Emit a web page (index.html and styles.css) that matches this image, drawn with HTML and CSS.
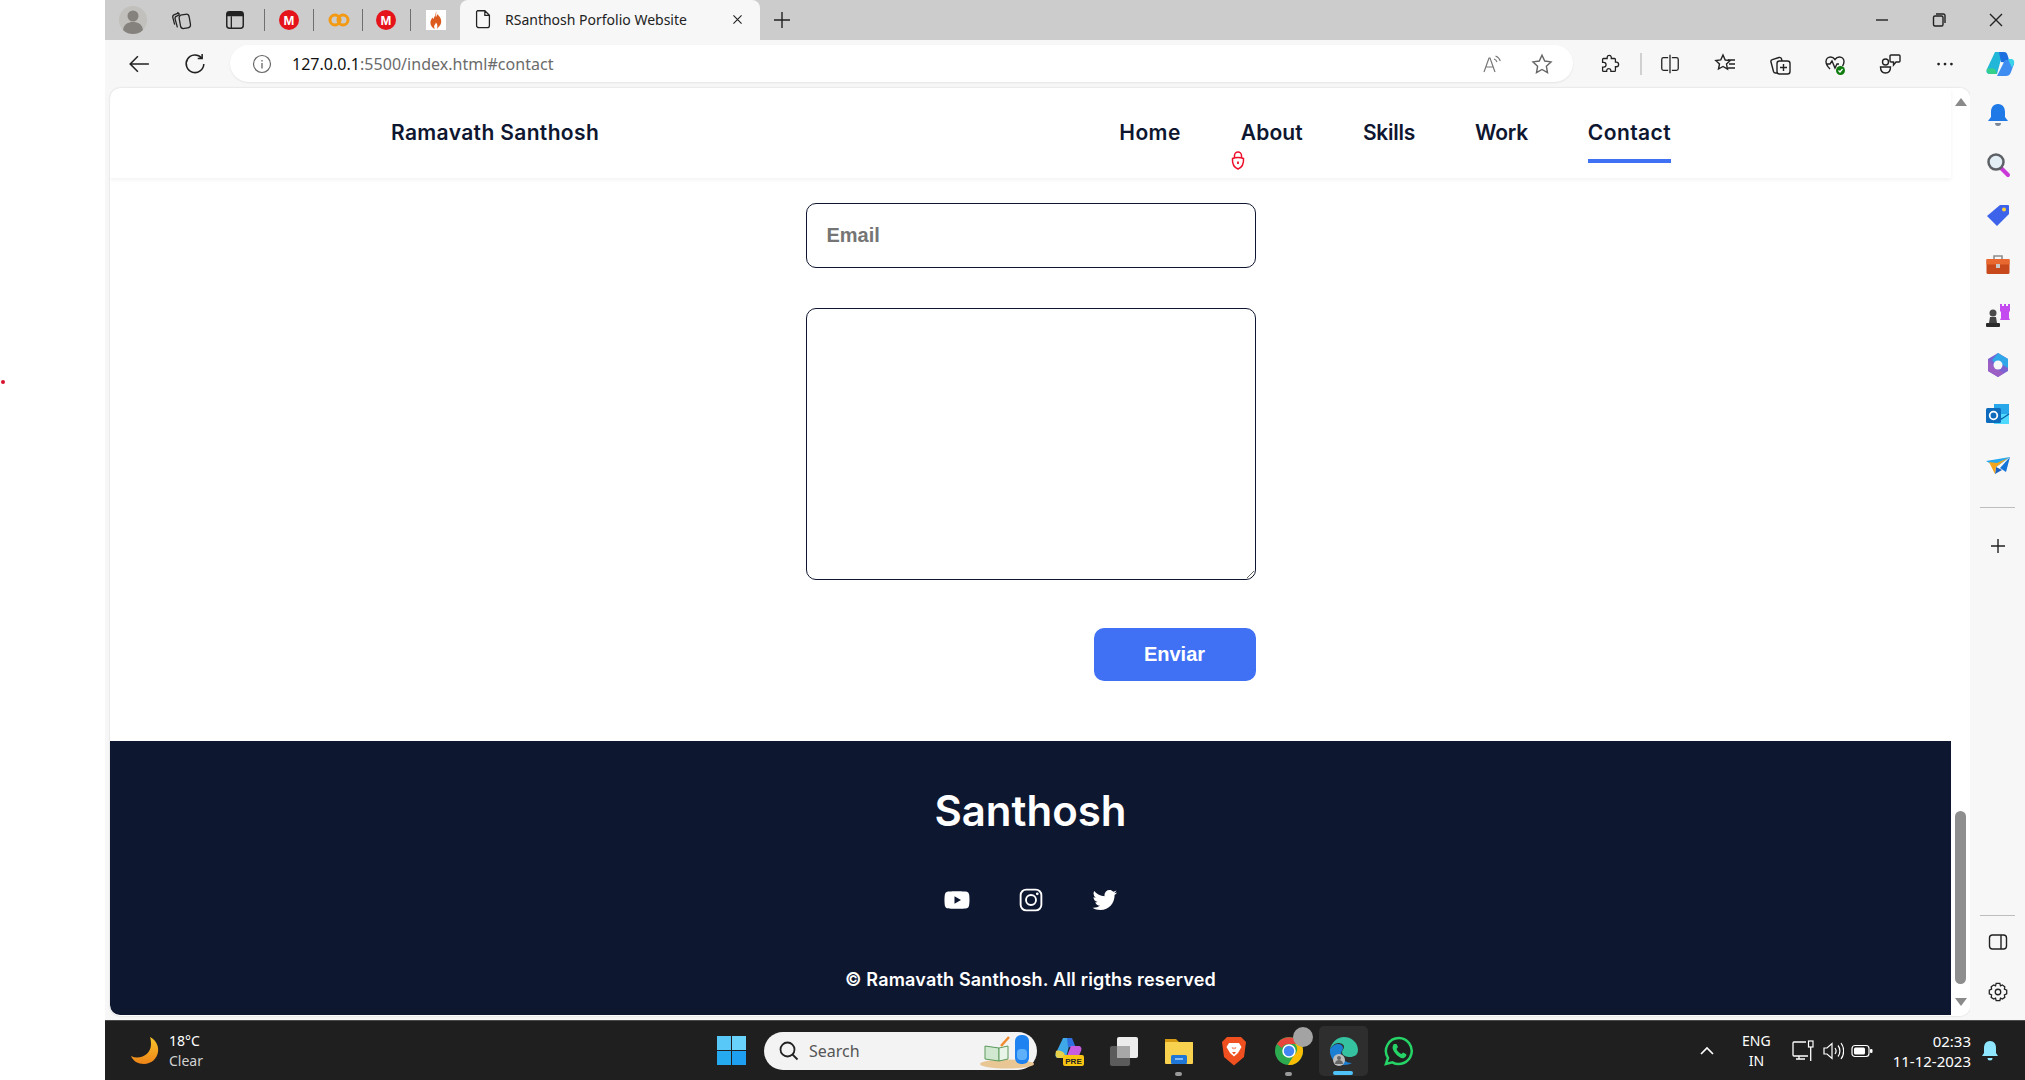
FILE: index.html
```html
<!DOCTYPE html>
<html lang="en">
<head>
<meta charset="utf-8">
<title>RSanthosh Porfolio Website</title>
<link rel="stylesheet" href="styles.css">
</head>
<body>
<span class="stray-dot"></span>
<div class="gutter"></div>
<div class="window">
  <div class="tabstrip">
    <svg class="avatar" viewBox="0 0 28 28"><circle cx="14" cy="14" r="14" fill="#c2c0bc"/><circle cx="14" cy="10" r="5.500" fill="#85827d"/><path d="M4 24c1-6 5-8 10-8s9 2 10 8c-3 3-7 4-10 4s-7-1-10-4z" fill="#85827d"/></svg>
    <svg class="ic22 ml24" viewBox="0 0 24 24"><g class="ln"><rect x="9.500" y="6" width="11" height="15" rx="3.500" transform="rotate(-10 15 13)"/><path d="M9.500 6 7 3.500M7 20l-2.500-9c-.4-1.500.3-2.800 1.700-3.300L9 6.500M4 17l-2-7.500C1.600 8 2.300 6.700 3.700 6.200L8 4.500"/></g></svg>
    <svg class="ic22 ml31" viewBox="0 0 24 24"><rect x="3" y="3" width="18" height="18" rx="3" fill="none" stroke="#222" stroke-width="1.600"/><path d="M3 6a3 3 0 0 1 3-3h12a3 3 0 0 1 3 3v2H3z" fill="#222"/><path d="M8 8v13" stroke="#222" stroke-width="1.400"/></svg>
    <i class="tab-sep ml18"></i>
    <svg class="ic22 ml13" viewBox="0 0 22 22"><circle cx="11" cy="11" r="10" fill="#e5131a"/><text x="11" y="15.500" class="mega-m">M</text></svg>
    <i class="tab-sep ml13"></i>
    <svg class="ic22 ml14" viewBox="0 0 22 22"><circle cx="7" cy="11" r="5" fill="none" stroke="#f39a12" stroke-width="3"/><circle cx="15" cy="11" r="5" fill="none" stroke="#f39a12" stroke-width="3"/></svg>
    <i class="tab-sep ml12"></i>
    <svg class="ic22 ml12" viewBox="0 0 22 22"><circle cx="11" cy="11" r="10" fill="#e5131a"/><text x="11" y="15.500" class="mega-m">M</text></svg>
    <i class="tab-sep ml13"></i>
    <svg class="ic20 ml15" viewBox="0 0 20 20"><rect width="20" height="20" fill="#fff"/><path d="M10 1c1 3-1 4 0 6 1-1 1-2 .8-3 3 2 5 5 4.300 9-.5 2.500-2.800 4-4.300 6 1-3 .8-5-1-6.500 0 1.500-1 2-1.500 3-.4 1 0 2.500.7 3.500-3-1-4.800-4-4.600-7 .2-2 1.500-3 1.800-4.500.6.500.9 1 1 1.800C9 6 10 4 10 1z" fill="#dd5a1f"/></svg>
    <div class="tab ml14">
      <svg class="ic22" viewBox="0 0 24 24"><path class="ln-d" d="M6 3h8l5 5v11a2.500 2.500 0 0 1-2.500 2.500h-9A2.500 2.500 0 0 1 5 19V4zM14 3v5h5"/></svg>
      <span class="tab-title">RSanthosh Porfolio Website</span>
      <svg class="ic16 tab-x" viewBox="0 0 16 16"><path class="ln-d" d="m3 3 10 10M13 3 3 13"/></svg>
    </div>
    <svg class="ic18 ml13" viewBox="0 0 18 18"><path class="ln-d" d="M9 1v16M1 9h16"/></svg>
    <div class="win-controls">
      <svg class="ic16" viewBox="0 0 16 16"><path class="ln-d" d="M2 8h12"/></svg>
      <svg class="ic16" viewBox="0 0 16 16"><rect class="ln-d" x="2.500" y="4" width="9.500" height="10" rx="1.500"/><path class="ln-d" d="M5 2h7.500A1.500 1.500 0 0 1 14 3.500V11"/></svg>
      <svg class="ic16" viewBox="0 0 16 16"><path class="ln-d" d="m2 2 12 12M14 2 2 14"/></svg>
    </div>
  </div>

  <div class="toolbar">
    <svg class="ic22 tb-back" viewBox="0 0 20 20"><path class="ln-d" d="M19 10H2m7-7-7 7 7 7"/></svg>
    <svg class="ic22 tb-reload" viewBox="0 0 20 20"><path class="ln-d" d="M16 4.500A8 8 0 1 0 18 10M16.500 1v4h-4"/></svg>
    <div class="address">
      <svg class="ic20" viewBox="0 0 20 20"><circle cx="10" cy="10" r="8.500" fill="none" stroke="#666" stroke-width="1.200"/><path d="M10 9v5.500M10 6v1.400" stroke="#666" stroke-width="1.300"/></svg>
      <span class="url"><span class="url-host">127.0.0.1</span>:5500/index.html#contact</span>
      <svg class="ic20 addr-read" viewBox="0 0 20 20"><path d="m1 18 5-14h1l5 14M3 13h7" fill="none" stroke="#777" stroke-width="1.200"/><path d="M11 5c1.500.5 2.500 1.500 3 3M12.500 2c2.500.8 4 2.500 4.800 5" fill="none" stroke="#777" stroke-width="1.100"/></svg>
      <svg class="ic22 addr-star" viewBox="0 0 20 20"><path d="m10 2 2.500 5.300 5.700.8-4.200 4 1 5.700-5-2.800-5 2.800 1-5.700-4.200-4 5.700-.8z" fill="none" stroke="#666" stroke-width="1.300"/></svg>
    </div>
    <span class="tb-slot puzzle"><svg class="ic22" viewBox="0 0 24 24"><path class="ln-d" d="M10 4.500a2.300 2.300 0 0 1 4.500 0V6h3.500a1 1 0 0 1 1 1v3h1a2.500 2.500 0 0 1 0 5h-1v4a1 1 0 0 1-1 1h-4v-1.200a2.300 2.300 0 0 0-4.500 0V20H6a1 1 0 0 1-1-1v-3.500h1.200a2.600 2.600 0 0 0 0-5.200H5V7a1 1 0 0 1 1-1h4z"/></svg></span>
    <i class="tb-sep"></i>
    <span class="tb-slot"><svg class="ic22" viewBox="0 0 24 24"><path class="ln-d" d="M10 5H5a2 2 0 0 0-2 2v10a2 2 0 0 0 2 2h5M14 5h5a2 2 0 0 1 2 2v10a2 2 0 0 1-2 2h-5M12 2v20"/></svg></span>
    <span class="tb-slot"><svg class="ic24" viewBox="0 0 24 24"><path class="ln-d" d="m10 3 2.200 5 5 .6-3.700 3.500 1 5L10 14.500 5.500 17l1-5-3.700-3.500 5-.6zM15 8h7M16 12h6M15 16h7"/></svg></span>
    <span class="tb-slot"><svg class="ic24" viewBox="0 0 24 24"><rect class="ln-d" x="9" y="9" width="13" height="13" rx="2.500"/><path class="ln-d" d="M15.500 12v7M12 15.500h7M9 21H7.500c-1 0-1.700-.6-2-1.500L3 10c-.3-1 .3-2 1.300-2.300L11 5.500c1-.3 2 .2 2.400 1.100L14 9"/></svg></span>
    <span class="tb-slot"><svg class="ic24" viewBox="0 0 24 24"><path class="ln-d" d="M7 17C4 14 3 12 3 9.500 3 7 5 5 7.500 5 9.500 5 11 6 12 7.500 13 6 14.500 5 16.500 5 19 5 21 7 21 9.500c0 1.500-.5 3-1.500 4.500M3 12h4l2-3 3 7 2-4h2"/><circle cx="17.500" cy="18.500" r="4.500" fill="#107c10"/><path d="m15.500 18.500 1.500 1.500 2.500-3" fill="none" stroke="#fff" stroke-width="1.200"/></svg></span>
    <span class="tb-slot"><svg class="ic24" viewBox="0 0 24 24"><circle class="ln-d" cx="7.500" cy="10" r="3"/><path class="ln-d" d="M2.500 15h10c0 4-2 6-5 6s-5-2-5-6zM13 3h8a1 1 0 0 1 1 1v5a1 1 0 0 1-1 1h-3l-2.500 3v-3H13a1 1 0 0 1-1-1V4a1 1 0 0 1 1-1z"/></svg></span>
    <span class="tb-slot"><svg class="ic22" viewBox="0 0 24 24"><circle cx="5" cy="12" r="1.500" fill="#222"/><circle cx="12" cy="12" r="1.500" fill="#222"/><circle cx="19" cy="12" r="1.500" fill="#222"/></svg></span>
    <span class="tb-slot"><svg class="ic30" viewBox="0 0 30 30"><path d="M10 3h8l-6 22H5c-3 0-4-2-3.500-4z" fill="#22b7d8"/><path d="M2 20c2-1 5-1 8 0l2 5H6c-3 0-4.500-2-4-5z" fill="#35d08a"/><path d="M14 3h5c2 0 3 1 3.500 3l2.500 8-9-1z" fill="#1e6fe0"/><path d="M20 11h6c3 0 3.500 2 3 4l-3 8c-1 3-3 4-5 4h-9z" fill="#3f8df0"/><path d="M23 10h4c2 .5 2.500 2.500 2 4l-2 5z" fill="#3ad5e8"/></svg></span>
  </div>

  <div class="content">
    <div class="page">
      <div class="page-col">
        <header class="site-header">
          <a class="logo">Ramavath Santhosh</a>
          <nav class="nav">
            <a class="nav-link">Home</a>
            <a class="nav-link snug">About</a>
            <a class="nav-link tight">Skills</a>
            <a class="nav-link tight">Work</a>
            <a class="nav-link active">Contact</a>
          </nav>
          <svg class="lock" viewBox="0 0 14 20"><path d="M3.500 9V5.500a3.500 3.500 0 0 1 7 0V9" fill="none" stroke="#ee0f2c" stroke-width="1.500"/><path d="M7 7.500c3 0 5.500 1 5.500 1 .4 5-1.800 9-5.500 10.500C3.300 17.500 1.100 13.500 1.500 8.500c0 0 2.500-1 5.500-1z" fill="#fff" stroke="#ee0f2c" stroke-width="1.500"/><path d="M7 11.500v2.500" stroke="#ee0f2c" stroke-width="1.800"/></svg>
        </header>
        <main class="main">
          <form class="contact-form">
            <input class="field field-input" type="text" placeholder="Email">
            <textarea class="field field-area"></textarea>
            <button class="submit" type="button">Enviar</button>
          </form>
        </main>
        <footer class="footer">
          <h2 class="footer-title">Santhosh</h2>
          <div class="socials">
            <svg class="ic30" viewBox="0 0 24 24"><path fill="#fff" d="M21.593 7.203a2.506 2.506 0 0 0-1.762-1.766C18.265 5.007 12 5 12 5s-6.264-.007-7.831.404a2.560 2.560 0 0 0-1.766 1.778c-.413 1.566-.417 4.814-.417 4.814s-.004 3.264.406 4.814c.230.857.905 1.534 1.763 1.765 1.582.430 7.830.437 7.830.437s6.265.007 7.831-.403a2.515 2.515 0 0 0 1.767-1.763c.414-1.565.417-4.812.417-4.812s.020-3.265-.407-4.831zM9.996 15.005l.005-6 5.207 3.005-5.212 2.995z"/></svg>
            <svg class="ic30" viewBox="0 0 24 24"><rect x="3.700" y="3.700" width="16.600" height="16.600" rx="4.500" fill="none" stroke="#fff" stroke-width="1.500"/><circle cx="12" cy="12" r="4" fill="none" stroke="#fff" stroke-width="1.500"/><circle cx="17" cy="7" r="1.100" fill="#fff"/></svg>
            <svg class="ic30" viewBox="0 0 24 24"><path fill="#fff" d="M19.633 7.997c.013.175.013.349.013.523 0 5.325-4.053 11.461-11.460 11.461-2.282 0-4.402-.661-6.186-1.809.324.037.636.050.973.050a8.070 8.070 0 0 0 5.001-1.721 4.036 4.036 0 0 1-3.767-2.793c.249.037.499.062.761.062.361 0 .724-.050 1.061-.137a4.027 4.027 0 0 1-3.230-3.953v-.050c.537.299 1.160.486 1.820.511a4.022 4.022 0 0 1-1.796-3.354c0-.748.199-1.434.548-2.032a11.457 11.457 0 0 0 8.306 4.215c-.062-.300-.100-.599-.100-.899a4.026 4.026 0 0 1 4.028-4.028c1.160 0 2.207.486 2.943 1.272a7.957 7.957 0 0 0 2.556-.973 4.020 4.020 0 0 1-1.771 2.220 8.073 8.073 0 0 0 2.319-.624 8.645 8.645 0 0 1-2.019 2.083z"/></svg>
          </div>
          <p class="copyright">© Ramavath Santhosh. All rigths reserved</p>
        </footer>
      </div>
      <div class="scrollbar">
        <i class="arrow-up"></i>
        <i class="thumb"></i>
        <i class="arrow-down"></i>
      </div>
    </div>
    <aside class="sidebar">
      <span class="side-slot"><svg class="ic26" viewBox="0 0 26 26"><path d="M13 2c-5 0-7 4-7 8v5l-3 4h20l-3-4v-5c0-4-2-8-7-8z" fill="#1f7ae8"/><path d="M10 21a3 3 0 0 0 6 0z" fill="#7a8796"/></svg></span>
      <span class="side-slot"><svg class="ic26" viewBox="0 0 26 26"><path d="m16 16 7 7" stroke="#c93ad8" stroke-width="4" stroke-linecap="round"/><circle cx="11" cy="10" r="7.500" fill="#e4eef5" stroke="#5d6165" stroke-width="2.500"/></svg></span>
      <span class="side-slot"><svg class="ic26" viewBox="0 0 26 26"><path d="M15 3h8a1 1 0 0 1 1 1v8L12 24 2 14z" fill="#3d63ea"/><circle cx="19" cy="7.500" r="2" fill="#ffd23c"/></svg></span>
      <span class="side-slot"><svg class="ic26" viewBox="0 0 26 26"><path d="M9 7V4h8v3" fill="none" stroke="#8d8d8d" stroke-width="1.600"/><rect x="1.500" y="7" width="23" height="15" rx="1.500" fill="#c8491c"/><rect x="1.500" y="7" width="23" height="5.500" fill="#e8682f"/><rect x="11" y="12" width="4" height="4" fill="#c9c9c9"/></svg></span>
      <span class="side-slot"><svg class="ic26" viewBox="0 0 26 26"><path d="M15 2h2v2h2V2h2v2h2V2h2v7l-1 1v6l1 2H15l1-2v-6l-1-1z" fill="#c44bf0"/><circle cx="8" cy="11" r="3.500" fill="#4a4a4a"/><path d="M5 15h6l1 6H4z" fill="#444"/><rect x="1" y="21" width="14" height="4" rx="1" fill="#2b2b2b"/></svg></span>
      <span class="side-slot"><svg class="ic26" viewBox="0 0 26 26"><path d="M13 1 23 7v12l-10 6L3 19V7z" fill="#7a63d0"/><path d="M13 1l10 6v9l-7-4c-2-2-4-2-6-1l-3-3z" fill="#2fa7e8"/><path d="M3 7v12l10 6 6-4-9-5z" fill="#9a5ec5"/><circle cx="13" cy="13" r="4.500" fill="#f7f7f7"/></svg></span>
      <span class="side-slot"><svg class="ic26" viewBox="0 0 26 26"><path d="M9 2h15v20H9z" fill="#28a8ea"/><path d="M9 12h15v10H9z" fill="#50d9ff"/><path d="m9 12 7.500 5L24 12" fill="none" stroke="#0a5fa8" stroke-width="1.200"/><rect x="1" y="6" width="15" height="15" rx="1.500" fill="#0f6cbd"/><circle cx="8.500" cy="13.500" r="3.800" fill="none" stroke="#fff" stroke-width="1.800"/></svg></span>
      <span class="side-slot"><svg class="ic26" viewBox="0 0 26 26"><path d="M1 9 25 5 11 15z" fill="#26a8f0"/><path d="M25 5 21 20l-6-4z" fill="#1574d8"/><path d="M11 15l6 3-7 4z" fill="#1b62c2"/><path d="M4 10l8 1 11-5-12 9-1 7z" fill="#f4a51c"/></svg></span>
      <i class="side-sep top-sep"></i>
      <span class="side-plus"><svg class="ic16" viewBox="0 0 16 16"><path class="ln-d" d="M8 1v14M1 8h14"/></svg></span>
      <i class="side-sep bottom-sep"></i>
      <span class="side-slot"><svg class="ic22" viewBox="0 0 22 22"><rect class="ln-d" x="2.500" y="4" width="17" height="14" rx="3"/><path class="ln-d" d="M14 4v14"/></svg></span>
      <span class="side-slot"><svg class="ic22" viewBox="0 0 24 24"><path class="ln-d" d="M10 2.500h4l.7 2.800 2-.9 2.700 1.800-.4 2.700 2.500 1.200v4l-2.500 1.100.4 2.700-2.700 1.800-2-.9-.7 2.700h-4l-.7-2.700-2 .9-2.700-1.800.4-2.700-2.500-1.100v-4l2.500-1.200-.4-2.700 2.700-1.800 2 .9z"/><circle class="ln-d" cx="12" cy="12" r="3"/></svg></span>
    </aside>
  </div>

  <div class="taskbar">
    <div class="weather">
      <svg class="ic30" viewBox="0 0 30 30"><defs><linearGradient id="moon" x1="0" y1="0" x2="0" y2="1"><stop offset="0" stop-color="#f6c52c"/><stop offset="1" stop-color="#ee8417"/></linearGradient></defs><path d="M20 1c6 3 9 9 8 15-1 7-7 12-14 12C8 28 3 25 1 20c2 1 4 1.500 6 1.500 8 0 14-6 14-13 0-3-.2-5-1-7.500z" fill="url(#moon)"/></svg>
      <div class="weather-text"><span>18°C</span><span class="weather-sub">Clear</span></div>
    </div>
    <svg class="winlogo" viewBox="0 0 29 29"><rect width="14" height="14" fill="#58c8f8"/><rect x="15" width="14" height="14" fill="#6ad3fb"/><rect y="15" width="14" height="14" fill="#25aaf0"/><rect x="15" y="15" width="14" height="14" fill="#1f9ff0"/></svg>
    <div class="search">
      <svg class="ic22" viewBox="0 0 22 22"><circle cx="9.500" cy="9.500" r="7" fill="none" stroke="#222" stroke-width="1.800"/><path d="m14.500 14.500 5 5" stroke="#222" stroke-width="1.800"/></svg>
      <span class="search-label">Search</span>
      <svg class="search-art" viewBox="0 0 56 36"><ellipse cx="28" cy="31" rx="27" ry="4.500" fill="#e8c795"/><path d="M6 13l14 2v13L6 26z" fill="#cfe8cf" stroke="#5c9a5c"/><path d="M20 15l9-2v13l-9 2z" fill="#e9f4e9" stroke="#5c9a5c"/><path d="m22 13 8-9" stroke="#f08a2c" stroke-width="2.500"/><rect x="36" y="2" width="14" height="29" rx="6" fill="#1e82f0"/><rect x="38" y="16" width="10" height="11" rx="4" fill="#5fb0fa"/></svg>
    </div>
    <div class="apps">
      <span class="app"><svg class="ic30" viewBox="0 0 30 30"><path d="M9 2h8l-5 20H4c-2 0-3-2-2.500-4z" fill="#3fa8e8"/><path d="M2 15c3-1 6 0 8 2l2 5H4c-2 0-3-3-2-7z" fill="#e8d14a"/><path d="M13 2h5l4 10-8-1z" fill="#2f6fe0"/><path d="M17 10h7c3 0 4 2 3 5l-3 7H12z" fill="#c75ce0"/><rect x="9" y="19" width="21" height="11" rx="2" fill="#f9c513"/><text x="19.500" y="28" class="pre">PRE</text></svg></span>
      <span class="app"><svg class="ic30" viewBox="0 0 30 30"><rect x="1" y="10" width="20" height="20" rx="2" fill="#5b5b5b"/><rect x="8" y="1" width="21" height="21" rx="2" fill="#ececec"/><rect x="8" y="10" width="13" height="12" fill="#a8a8a8"/></svg></span>
      <span class="app"><svg class="ic30" viewBox="0 0 30 30"><path d="M1 3h11l3 3h14v5H1z" fill="#d69a12"/><rect x="1" y="6" width="28" height="22" rx="1" fill="#f8d24f"/><rect x="7" y="19" width="16" height="9" rx="1.500" fill="#1f76d6"/><path d="M11 23h8" stroke="#a8d4ff" stroke-width="1.500"/></svg><i class="app-dot"></i></span>
      <span class="app"><svg class="ic30" viewBox="0 0 30 30"><path d="M8 1h14l5 5-2 15-10 8.500L5 21 3 6z" fill="#f0501f"/><path d="M10 7h10l2.500 4-3.500 6-4 3.500-4-3.500-3.500-6z" fill="#fff"/><path d="M12.500 11.500h2v2zM17.500 11.500h-2v2zM13 16h4l-2 2.500z" fill="#f0501f"/></svg></span>
      <span class="app"><svg class="ic30" viewBox="0 0 30 30"><circle cx="15" cy="15" r="14" fill="#2da94f"/><path d="M3 8a14 14 0 0 1 24 0H15a7 7 0 0 0-7 4z" fill="#e8453c"/><path d="M27 8a14 14 0 0 1-13 21l6-10a7 7 0 0 0 1-11z" fill="#fbbc05"/><circle cx="15" cy="15" r="6" fill="#4285f4" stroke="#fff" stroke-width="1.500"/></svg><i class="chrome-badge"></i><i class="app-dot"></i></span>
      <span class="app app-active"><svg class="ic30" viewBox="0 0 30 30"><path d="M15 1c8 0 14 6 14 13 0 5-4 7-8 7-3 0-8-1-8-5 0-2 2-3 2-5 0-3-3-4-6-4-3 0-6 3-8 6C3 6 8 1 15 1z" fill="#34c2a0"/><path d="M1 13c2-3 5-5 8-5 3 0 5 2 5 4 0 2-2 3-2 6 0 4 4 9 11 9-2 1-5 2-8 2C7 29 0 22 1 13z" fill="#1b7fd4"/><circle cx="10" cy="24" r="6" fill="#bdbdbd"/><circle cx="10" cy="22" r="2" fill="#666"/><path d="M6 28c0-3 2-4 4-4s4 1 4 4z" fill="#666"/></svg><i class="app-bar"></i></span>
      <span class="app"><svg class="ic30" viewBox="0 0 30 30"><path d="M15 2a13 13 0 0 0-11 20L2 28l6.300-1.700A13 13 0 1 0 15 2z" fill="none" stroke="#25d366" stroke-width="2.500"/><path d="M10 8c-2 2-2 5 1 9s7 6 9 5c2-1 3-3 2-4l-3-1.500-1.500 1.500c-2-.5-4.500-3-5-5L14 11l-1.500-3z" fill="#25d366"/></svg></span>
    </div>
    <div class="tray">
      <svg class="ic16 tray-chev" viewBox="0 0 16 16"><path d="m2 11 6-6 6 6" fill="none" stroke="#fff" stroke-width="1.600"/></svg>
      <div class="lang"><span>ENG</span><span>IN</span></div>
      <svg class="tray-net" viewBox="0 0 24 24"><path d="M15 3H3a1 1 0 0 0-1 1v12a1 1 0 0 0 1 1h14M8 17v3M5 20h9" fill="none" stroke="#fff" stroke-width="1.300"/><rect x="17.500" y="2" width="4.500" height="6" fill="none" stroke="#fff" stroke-width="1.200"/><path d="M19.700 8v14" stroke="#fff" stroke-width="1.300"/></svg>
      <svg class="tray-vol" viewBox="0 0 22 22"><path d="M2 8h3l5-4.500v15L5 14H2z" fill="none" stroke="#fff" stroke-width="1.200"/><path d="M13 8c1.300 1.800 1.300 4.200 0 6M16 5.500c2.500 3 2.500 8 0 11M19 3c3.500 4.500 3.500 11.500 0 16" fill="none" stroke="#fff" stroke-width="1.200"/></svg>
      <svg class="tray-bat" viewBox="0 0 22 22"><rect x="1" y="5.500" width="17" height="11" rx="3" fill="none" stroke="#fff" stroke-width="1.200"/><rect x="3" y="7.500" width="11" height="7" rx="1.500" fill="#fff"/><rect x="19" y="9" width="2.500" height="4" rx="1" fill="#fff"/></svg>
      <div class="clock"><span>02:33</span><span>11-12-2023</span></div>
      <svg class="ic22 tray-bell" viewBox="0 0 22 22"><path d="M11 1c-4 0-6 3-6 7v5l-2 3h16l-2-3V8c0-4-2-7-6-7z" fill="#8ee6ff"/><path d="M8.500 18a2.500 2.500 0 0 0 5 0z" fill="#8ee6ff"/></svg>
    </div>
  </div>
</div>
</body>
</html>
```

FILE: styles.css
```css
* { box-sizing: border-box; }
html, body { margin: 0; height: 100%; }
body {
  position: relative;
  display: flex;
  width: 2025px;
  height: 1080px;
  overflow: hidden;
  background: #fff;
  font-family: "Noto Sans", sans-serif;
  color: #111;
}
svg { display: block; flex: none; }
i { display: block; flex: none; }
.stray-dot { position: absolute; left: 1px; top: 380px; width: 4px; height: 4px; border-radius: 50%; background: #d8102c; }
.gutter { width: 105px; flex: none; }
.window { flex: 1; display: flex; flex-direction: column; min-width: 0; }

.ln { fill: none; stroke: #222; stroke-width: 1.400; }
.ln-d { fill: none; stroke: #222; stroke-width: 1.400; }
.ic16 { width: 16px; height: 16px; }
.ic18 { width: 18px; height: 18px; }
.ic20 { width: 20px; height: 20px; }
.ic22 { width: 22px; height: 22px; }
.ic24 { width: 24px; height: 24px; }
.ic26 { width: 26px; height: 26px; }
.ic30 { width: 30px; height: 30px; }
.ml12 { margin-left: 12px; }
.ml13 { margin-left: 13px; }
.ml14 { margin-left: 14px; }
.ml15 { margin-left: 15px; }
.ml18 { margin-left: 18px; }
.ml24 { margin-left: 24px; }
.ml31 { margin-left: 31px; }

/* tab strip */
.tabstrip { height: 40px; flex: none; display: flex; align-items: center; padding-left: 14px; background: #cccccc; }
.avatar { width: 28px; height: 28px; }
.tab-sep { width: 1px; height: 22px; background: #6f6f6f; }
.mega-m { font: 700 13px "Liberation Sans", sans-serif; fill: #fff; text-anchor: middle; }
.tab { align-self: flex-end; width: 300px; height: 40px; display: flex; align-items: center; padding: 0 16px 2px 12px; background: #f7f7f7; border-radius: 8px 8px 0 0; }
.tab-title { margin-left: 11px; font-size: 14px; color: #222; white-space: nowrap; }
.tab-x { margin-left: auto; width: 13px; height: 13px; }
.win-controls { margin-left: auto; display: flex; align-items: center; gap: 41px; padding-right: 21px; }

/* toolbar */
.toolbar { height: 48px; flex: none; display: flex; align-items: center; background: #f7f7f7; padding-bottom: 1px; }
.tb-back { margin-left: 23px; }
.tb-reload { margin-left: 34px; }
.address { margin-left: 24px; width: 1343px; height: 37px; flex: none; display: flex; align-items: center; padding: 0 20px 0 22px; background: #fff; border-radius: 19px; box-shadow: 0 1px 2px rgba(0,0,0,.08); }
.url { margin-left: 20px; font-size: 16px; letter-spacing: .03px; color: #6b6b6b; white-space: nowrap; }
.url-host { color: #111; }
.addr-read { margin-left: auto; }
.addr-star { margin-left: 28px; }
.tb-slot { width: 55px; flex: none; display: flex; justify-content: center; }
.puzzle { margin-left: 8px; }
.tb-sep { width: 2px; height: 22px; margin-left: 4px; background: #d0d0d0; }

/* content */
.content { height: 932px; flex: none; display: flex; background: #f7f7f7; }
.page { margin-left: 5px; width: 1860px; height: 928px; flex: none; display: flex; background: #fff; border-radius: 10px; overflow: hidden; box-shadow: 0 0 2px rgba(0,0,0,.18); }
.page-col { flex: 1; min-width: 0; display: flex; flex-direction: column; }
.site-header { position: relative; height: 90px; flex: none; display: flex; align-items: flex-start; justify-content: space-between; padding: 30px 280px 0 281px; box-shadow: 0 2px 4px rgba(14,22,48,.05); }
.logo { font: 600 21px/30px Inter, sans-serif; color: #0e1630; letter-spacing: .35px; }
.nav { display: flex; gap: 60px; }
.nav-link { font: 600 21px/30px Inter, sans-serif; color: #0e1630; letter-spacing: .4px; padding-bottom: 11px; border-bottom: 4px solid transparent; }
.nav-link.snug { letter-spacing: .15px; }
.nav-link.tight { letter-spacing: -.25px; }
.nav-link.active { border-bottom-color: #4070f4; }
.lock { position: absolute; left: 1121px; top: 62px; width: 14px; height: 20px; }

.main { flex: 1; min-height: 0; display: flex; justify-content: center; padding-top: 25px; }
.contact-form { width: 450px; display: flex; flex-direction: column; }
.field { display: block; width: 100%; border: 1px solid #0e1630; border-radius: 10px; background: #fff; padding: 16px 20px; font: 700 20px "Liberation Sans", sans-serif; color: #0e1630; outline: none; }
.field::placeholder { color: #757575; opacity: 1; }
.field-input { height: 65px; flex: none; }
.field-area { height: 272px; flex: none; margin-top: 40px; }
.submit { width: 162px; height: 53px; flex: none; margin-top: 48px; align-self: flex-end; border: 0; border-radius: 10px; background: #4070f4; color: #fff; font: 700 20px "Liberation Sans", sans-serif; }

.footer { height: 274px; flex: none; margin-bottom: 1px; display: flex; flex-direction: column; align-items: center; padding-top: 40px; background: #0e1730; color: #fff; border-bottom-left-radius: 10px; }
.footer-title { margin: 0; font: 600 42px/60px Inter, sans-serif; }
.socials { display: flex; gap: 44px; margin-top: 44px; }
.copyright { margin: 53px 0 0; font: 600 18px/24px Inter, sans-serif; letter-spacing: .18px; }

.scrollbar { width: 19px; flex: none; display: flex; flex-direction: column; align-items: center; padding: 10px 0; background: #fff; }
.arrow-up { width: 0; height: 0; border: 6px solid transparent; border-top: 0; border-bottom: 8px solid #8a8a8a; }
.thumb { width: 11px; height: 173px; margin-top: auto; border-radius: 6px; background: #8e8e8e; }
.arrow-down { width: 0; height: 0; margin-top: 14px; border: 6px solid transparent; border-bottom: 0; border-top: 8px solid #8a8a8a; }

/* sidebar */
.sidebar { width: 55px; flex: none; display: flex; flex-direction: column; align-items: center; padding: 2px 0 3px; background: #f7f7f7; }
.side-slot { height: 50px; flex: none; display: flex; align-items: center; justify-content: center; }
.side-sep { width: 35px; height: 1px; background: #bdbdbd; }
.top-sep { margin-top: 17px; }
.side-plus { height: 40px; margin-top: 18px; flex: none; display: flex; align-items: center; }
.bottom-sep { margin-top: auto; margin-bottom: 1px; }

/* taskbar */
.taskbar { height: 60px; flex: none; display: flex; align-items: center; background: #1f1f1f; border-top: 1px solid #4a4a4a; color: #fff; }
.weather { width: 612px; flex: none; display: flex; align-items: center; padding-left: 25px; }
.weather-text { margin-left: 9px; display: flex; flex-direction: column; font-size: 14px; line-height: 20px; }
.weather-sub { color: #d2d2d2; }
.winlogo { width: 29px; height: 29px; }
.search { margin-left: 18px; width: 273px; height: 38px; flex: none; display: flex; align-items: center; padding-left: 14px; border-radius: 19px; background: #f3f3f3; }
.search-label { margin-left: 9px; font-size: 16px; color: #555; }
.search-art { margin-left: auto; margin-right: 2px; width: 56px; height: 36px; }
.apps { margin-left: 4px; display: flex; }
.app { position: relative; width: 55px; height: 50px; flex: none; display: flex; align-items: center; justify-content: center; }
.pre { font: 700 8px "Liberation Sans", sans-serif; text-anchor: middle; fill: #222; }
.app-dot { position: absolute; left: 24px; bottom: 0; width: 7px; height: 4px; border-radius: 2px; background: #9a9a9a; }
.app-active::before { content: ""; position: absolute; left: 3px; top: 0; width: 49px; height: 50px; border-radius: 5px; background: #2e2e2e; }
.app-active svg { position: relative; }
.app-bar { position: absolute; left: 17px; bottom: 1px; width: 20px; height: 4px; border-radius: 2px; background: #4fc3f7; }
.chrome-badge { position: absolute; left: 32px; top: 1px; width: 20px; height: 20px; border-radius: 50%; background: #a3a3a3; }
.tray { margin-left: auto; display: flex; align-items: center; padding-right: 24px; font-size: 15px; }
.lang { margin-left: 27px; display: flex; flex-direction: column; align-items: center; line-height: 20px; font-size: 14px; }
.tray-chev { width: 16px; height: 16px; }
.tray-net { margin-left: 20px; width: 24px; height: 24px; }
.tray-vol { margin-left: 7px; width: 22px; height: 22px; }
.tray-bat { margin-left: 7px; width: 22px; height: 22px; }
.clock { margin-left: 20px; display: flex; flex-direction: column; align-items: flex-end; line-height: 20px; }
.tray-bell { margin-left: 8px; }
```
